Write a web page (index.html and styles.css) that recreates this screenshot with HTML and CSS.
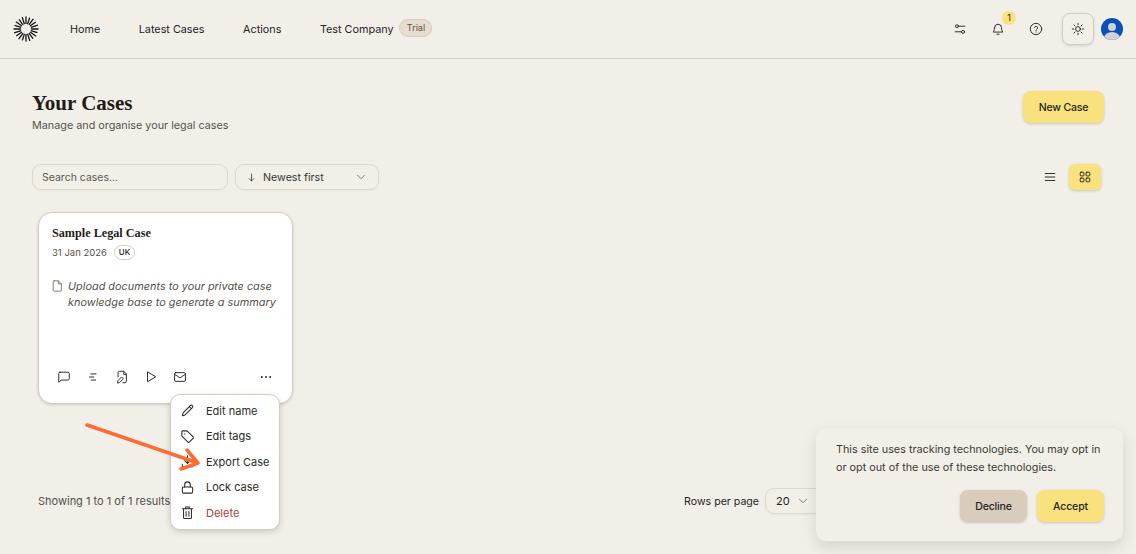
FILE: index.html
```html
<!DOCTYPE html>
<html lang="en">
<head>
<meta charset="utf-8">
<title>Your Cases</title>
<link rel="stylesheet" href="styles.css">
</head>
<body>
<header class="topbar">
  <svg class="logo" viewBox="0 0 26 26" width="26" height="26"><g stroke="#151515" stroke-width="1.300"><path d="M13 0.500v7.500M13 18v7.500M0.500 13h7.500M18 13h7.500"/><path d="M13 1v7M13 18v7" transform="rotate(18 13 13)"/><path d="M13 0.500v7.500M13 18v7.500" transform="rotate(36 13 13)"/><path d="M13 1v7M13 18v7" transform="rotate(54 13 13)"/><path d="M13 0.500v7.500M13 18v7.500" transform="rotate(72 13 13)"/><path d="M13 1v7M13 18v7" transform="rotate(108 13 13)"/><path d="M13 0.500v7.500M13 18v7.500" transform="rotate(126 13 13)"/><path d="M13 1v7M13 18v7" transform="rotate(144 13 13)"/><path d="M13 0.500v7.500M13 18v7.500" transform="rotate(162 13 13)"/></g></svg>
  <nav class="nav">
    <a class="nav-link">Home</a>
    <a class="nav-link">Latest Cases</a>
    <a class="nav-link">Actions</a>
    <span class="company"><a class="nav-link">Test Company</a><span class="trial">Trial</span></span>
  </nav>
  <div class="top-actions">
    <button class="icon-btn"><svg class="ic" viewBox="0 0 16 16"><circle cx="4.500" cy="4.800" r="1.700"/><circle cx="11.500" cy="11.200" r="1.700"/><path d="M6.200 4.800H13.500M2.500 11.200h7.300"/></svg></button>
    <button class="icon-btn bell"><svg class="ic" viewBox="0 0 16 16"><path d="M4 6.500a4 4 0 0 1 8 0c0 3.500 1.500 4.800 1.500 5H2.500c0-.2 1.500-1.500 1.500-5zM6.700 14h2.600"/></svg><span class="count">1</span></button>
    <button class="icon-btn"><svg class="ic" viewBox="0 0 16 16"><circle cx="8" cy="8" r="6.500"/><path d="M6.200 6.300A1.900 1.900 0 0 1 9.900 6.800c0 1.300-1.900 1.500-1.900 2.700M8 11.300v.3"/></svg></button>
    <button class="theme-btn"><svg class="ic" viewBox="0 0 16 16"><circle cx="8" cy="8" r="2.700"/><path d="M8 1.500v1.700M8 12.800v1.700M1.500 8h1.700M12.800 8h1.700M3.400 3.400l1.200 1.200M11.400 11.400l1.200 1.200M3.400 12.600l1.200-1.200M11.400 4.600l1.200-1.200"/></svg></button>
    <svg class="avatar" viewBox="0 0 22 22" width="22" height="22"><defs><clipPath id="av"><circle cx="11" cy="11" r="11"/></clipPath></defs><g clip-path="url(#av)"><rect width="22" height="22" fill="#0b50b8"/><circle cx="11" cy="9" r="4" fill="#cfd2d6"/><ellipse cx="11" cy="20" rx="8" ry="6" fill="#cfd2d6"/></g></svg>
  </div>
</header>

<main class="page">
  <section class="page-head">
    <div>
      <h1 class="title">Your Cases</h1>
      <p class="subtitle">Manage and organise your legal cases</p>
    </div>
    <button class="btn btn-yellow new-case">New Case</button>
  </section>

  <section class="toolbar">
    <div class="search">Search cases...</div>
    <div class="sort">
      <svg class="ic small" viewBox="0 0 16 16"><path d="M8 3v10M4.500 9.500 8 13l3.500-3.500"/></svg>
      <span class="sort-label">Newest first</span>
      <svg class="ic chev" viewBox="0 0 16 16"><path d="m4 6 4 4 4-4"/></svg>
    </div>
    <div class="views">
      <button class="view-btn"><svg class="ic" viewBox="0 0 16 16"><path d="M2.500 4h11M2.500 8h11M2.500 12h11"/></svg></button>
      <button class="view-btn active"><svg class="ic" viewBox="0 0 16 16"><rect x="2.500" y="2.500" width="4.300" height="4.300" rx="1"/><rect x="9.200" y="2.500" width="4.300" height="4.300" rx="1"/><rect x="2.500" y="9.200" width="4.300" height="4.300" rx="1"/><rect x="9.200" y="9.200" width="4.300" height="4.300" rx="1"/></svg></button>
    </div>
  </section>

  <section class="cards">
    <article class="card">
      <h2 class="card-title">Sample Legal Case</h2>
      <div class="card-meta"><span>31 Jan 2026</span><span class="tag">UK</span></div>
      <div class="card-body">
        <svg class="ic doc" viewBox="0 0 12 14"><path d="M2 1h5l3.500 3.500V12a1 1 0 0 1-1 1H2a1 1 0 0 1-1-1V2a1 1 0 0 1 1-1zM7 1v3.500h3.500"/></svg>
        <p>Upload documents to your private case knowledge base to generate a summary</p>
      </div>
      <div class="card-actions">
        <svg class="ic act" viewBox="0 0 16 16"><path d="M3.500 2.500h9a1.500 1.500 0 0 1 1.500 1.500v6a1.500 1.500 0 0 1-1.500 1.500H5L2 14V4a1.500 1.500 0 0 1 1.500-1.500z"/></svg>
        <svg class="ic act" viewBox="0 0 16 16"><path d="M5.500 4.500h6M4 8h5M6 11.500h5"/></svg>
        <svg class="ic act" viewBox="0 0 16 16"><path d="M3.500 8V3a1.500 1.500 0 0 1 1.500-1.500h5l3 3V13a1.500 1.500 0 0 1-1.500 1.500H9M10 1.500V5h3M3 14.500l.5-2.500 4-4 2 2-4 4z"/></svg>
        <svg class="ic act" viewBox="0 0 16 16"><path d="M4 2.500v11L13 8z"/></svg>
        <svg class="ic act" viewBox="0 0 16 16"><rect x="1.800" y="3" width="12.400" height="10" rx="1.500"/><path d="m2 5 6 4 6-4"/></svg>
        <svg class="more" viewBox="0 0 16 16" width="16" height="16"><circle cx="3.800" cy="8" r="1"/><circle cx="8" cy="8" r="1"/><circle cx="12.200" cy="8" r="1"/></svg>
      </div>
    </article>
  </section>

  <section class="pager">
    <span class="showing">Showing 1 to 1 of 1 results</span>
    <div class="rows">
      <span>Rows per page</span>
      <div class="rows-select">20<svg class="ic chev-rows" viewBox="0 0 16 16"><path d="m4 6 4 4 4-4"/></svg></div>
    </div>
  </section>
</main>

<ul class="menu">
  <li class="menu-item"><svg class="ic" viewBox="0 0 16 16"><path d="M2.500 13.500l.8-3L11 2.800a1.500 1.500 0 0 1 2.200 2.200l-7.700 7.700zM10 4l2 2"/></svg>Edit name</li>
  <li class="menu-item"><svg class="ic" viewBox="0 0 16 16"><path d="M2 3a1 1 0 0 1 1-1h4.500l6.500 6.500a1 1 0 0 1 0 1.400L9.900 14a1 1 0 0 1-1.400 0L2 7.500zM5 5v.2"/></svg>Edit tags</li>
  <li class="menu-item"><svg class="ic" viewBox="0 0 16 16"><path d="M8 2v8M5 7l3 3 3-3M2.500 11v2.500h11V11"/></svg>Export Case</li>
  <li class="menu-item"><svg class="ic" viewBox="0 0 16 16"><rect x="2.500" y="7.500" width="11" height="6.500" rx="1.500"/><path d="M5 7.500V5a3 3 0 0 1 6 0v2.500"/></svg>Lock case</li>
  <li class="menu-item danger"><svg class="ic" viewBox="0 0 16 16"><path d="M2.500 4h11M6 4V2.200h4V4M3.800 4v9.500a1 1 0 0 0 1 1h6.400a1 1 0 0 0 1-1V4M6.500 7v5M9.500 7v5"/></svg>Delete</li>
</ul>

<svg class="arrow" viewBox="0 0 130 50" width="130" height="50"><path d="M2 2 113 40M102 27l11 13-17 6" fill="none" stroke="#ff6b35" stroke-width="3.500" stroke-linecap="round" stroke-linejoin="round"/></svg>

<aside class="cookie">
  <p>This site uses tracking technologies. You may opt in or opt out of the use of these technologies.</p>
  <div class="cookie-actions">
    <button class="btn btn-tan">Decline</button>
    <button class="btn btn-yellow">Accept</button>
  </div>
</aside>
</body>
</html>
```

FILE: styles.css
```css
* { box-sizing: border-box; }
html, body { height: 100%; }
body {
  margin: 0;
  height: 554px;
  overflow: hidden;
  position: relative;
  background: #f2efe9;
  color: #26231f;
  font-family: "Inter", "Liberation Sans", sans-serif;
  font-size: 11px;
}
button { font: inherit; color: inherit; border: 0; background: none; padding: 0; }
p, h1, h2, ul { margin: 0; padding: 0; }

.ic {
  width: 14px;
  height: 14px;
  fill: none;
  stroke: #2c2925;
  stroke-width: 1.100;
  stroke-linecap: round;
  stroke-linejoin: round;
  flex: none;
}
.ic.small { width: 11px; height: 11px; }

.topbar {
  height: 59px;
  display: flex;
  align-items: center;
  padding: 0 13px 0 12.500px;
  border-bottom: 1px solid #d8cbbb;
}
.logo { flex: none; }
.nav { display: flex; align-items: center; gap: 38.500px; margin-left: 31.500px; font-size: 10.800px; }
.nav-link { color: #26231f; }
.company { display: flex; align-items: center; gap: 6px; }
.trial {
  width: 33px;
  height: 18px;
  line-height: 15px;
  text-align: center;
  border-radius: 10px;
  background: #e6dccf;
  border: 1px solid #d8cbbb;
  font-size: 9px;
  color: #5a544c;
  position: relative;
  top: -1px;
}
.top-actions { margin-left: auto; display: flex; align-items: center; }
.icon-btn { width: 38px; height: 32px; display: flex; align-items: center; justify-content: center; position: relative; }
.count {
  position: absolute;
  top: -2px;
  left: 23px;
  width: 14px;
  height: 14px;
  border-radius: 50%;
  background: #f9e27d;
  font-size: 9px;
  line-height: 14px;
  text-align: center;
}
.theme-btn {
  width: 32px;
  height: 32px;
  margin-left: 7px;
  margin-right: 7px;
  border: 1px solid #d8cbbb;
  border-radius: 8px;
  display: flex;
  align-items: center;
  justify-content: center;
  box-shadow: 0 1px 3px rgba(0,0,0,.12);
}
.avatar { display: block; flex: none; }

.page { padding: 32px 32px 0; }
.page-head { display: flex; justify-content: space-between; align-items: flex-start; height: 73px; }
.title {
  font-family: "Liberation Serif", serif;
  font-weight: 700;
  font-size: 21px;
  line-height: 24px;
  color: #1f1c18;
}
.subtitle { font-size: 10.800px; line-height: 16px; margin-top: 3px; color: #57524b; }
.btn {
  height: 32px;
  border-radius: 8px;
  box-shadow: 0 1px 3px rgba(0,0,0,.18);
  font-size: 10.500px;
  font-weight: 500;
  letter-spacing: -0.150px;
  color: #26231f;
}
.btn-yellow { background: #f9e27d; }
.btn-tan { background: #d9ccbb; }
.new-case { width: 81px; }

.toolbar { display: flex; align-items: center; gap: 7px; height: 26px; }
.search, .sort, .rows-select {
  height: 26px;
  border: 1px solid #e0d6c9;
  border-radius: 9px;
  display: flex;
  align-items: center;
  box-shadow: 0 1px 2px rgba(0,0,0,.04);
}
.search { width: 196px; padding-left: 9px; color: #5d5850; font-size: 10.500px; }
.sort { width: 144px; padding: 0 10px; color: #3a362f; font-size: 10.700px; }
.sort-label { margin-left: 6px; }
.chev { margin-left: auto; stroke: #7d776e; }
.chev-rows { stroke: #7d776e; }
.views { margin-left: auto; display: flex; align-items: center; gap: 3px; margin-right: 3px; }
.view-btn { width: 32px; height: 26px; display: flex; align-items: center; justify-content: center; border-radius: 6px; }
.view-btn.active { background: #f9e27d; box-shadow: 0 1px 3px rgba(0,0,0,.18); }

.cards { padding: 22px 0 0 6px; }
.card {
  width: 255px;
  height: 192px;
  background: #fff;
  border: 1px solid #d8cbbb;
  border-radius: 14px;
  box-shadow: 0 1px 3px rgba(0,0,0,.14);
  padding: 12px 12px 0 13px;
  display: flex;
  flex-direction: column;
}
.card-title {
  font-family: "Liberation Serif", serif;
  font-size: 12.200px;
  line-height: 16px;
  font-weight: 700;
  color: #1f1c18;
}
.card-meta { display: flex; align-items: center; gap: 7px; margin-top: 3px; font-size: 9.500px; color: #55504a; height: 16px; }
.tag {
  border: 1px solid #d8cbbb;
  border-radius: 8px;
  width: 21px;
  text-align: center;
  font-size: 8px;
  line-height: 13px;
  font-weight: 500;
  color: #26231f;
}
.card-body { display: flex; gap: 5px; margin-top: 18px; }
.card-body p { font-style: italic; font-size: 10.900px; line-height: 16px; color: #55504a; }
.doc { width: 11px; height: 12px; margin-top: 2px; stroke: #7d776e; }
.card-actions { margin-top: auto; margin-bottom: 18px; display: flex; align-items: center; gap: 15px; padding-left: 5px; }
.act { width: 14px; height: 14px; }
.more { margin-left: auto; fill: #2c2925; margin-right: 6px; }

.pager { display: flex; align-items: center; margin-top: 84px; padding: 0 277px 0 6px; }
.showing { color: #55504a; }
.rows { margin-left: auto; display: flex; align-items: center; gap: 6px; font-size: 10.600px; }
.rows-select { width: 62px; padding: 0 10px; gap: 6px; font-size: 11px; }

.menu {
  position: absolute;
  left: 170px;
  top: 394px;
  width: 110px;
  height: 136px;
  list-style: none;
  background: #fff;
  border: 1px solid #d8cbbb;
  border-radius: 10px;
  box-shadow: 0 2px 6px rgba(0,0,0,.16);
  padding: 3px 0;
  display: flex;
  flex-direction: column;
}
.menu-item { display: flex; align-items: center; gap: 11px; padding-left: 9px; height: 25.500px; color: #2c2925; flex: none; }
.menu-item .ic { width: 15px; height: 15px; }
.menu-item.danger { color: #a8402f; }

.arrow { position: absolute; left: 85px; top: 423px; }

.cookie {
  position: absolute;
  left: 816px;
  top: 428px;
  width: 307px;
  height: 113px;
  background: #f2efe9;
  border-radius: 10px;
  box-shadow: 0 6px 16px rgba(0,0,0,.12);
  padding: 13px 16px 0 20px;
}
.cookie p { font-size: 10.800px; line-height: 18px; color: #3d3932; }
.cookie-actions { display: flex; justify-content: flex-end; gap: 10px; margin-top: 13px; margin-right: 3px; }
.cookie-actions .btn { width: 67px; }
```
